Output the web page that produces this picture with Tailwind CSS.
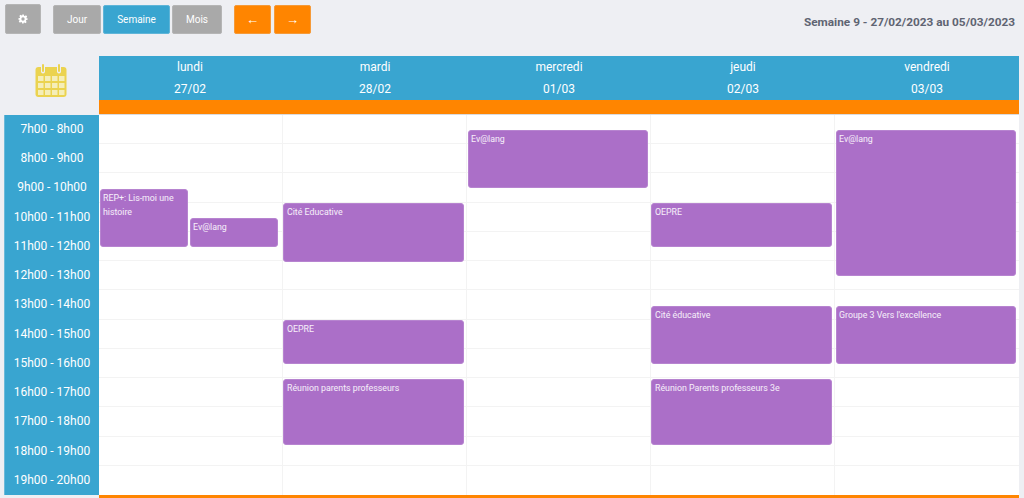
<!DOCTYPE html>
<html lang="fr"><head><meta charset="utf-8"><script src="https://cdn.jsdelivr.net/npm/@tailwindcss/browser@4"></script></head>
<body class="w-[1024px] h-[498px] overflow-hidden bg-[#eeeff3] font-['Roboto',sans-serif]">
<div class="h-[56px] pl-[5px] pr-[9px] pt-[4px] flex items-start">
  <button class="w-[36px] h-[30px] bg-[#a9a9a9] rounded-[2px] border border-[#b5b5b5] flex items-center justify-center mr-[12px]">
    <svg width="10" height="10" viewBox="0 0 24 24" fill="#fff"><path fill-rule="evenodd" d="M10 1h4l.6 3.200 1.900.8 2.700-1.800 2.800 2.800-1.800 2.700.8 1.900L23 10v4l-3.200.6-.8 1.900 1.800 2.700-2.800 2.800-2.700-1.800-1.900.8L13.800 23h-4l-.6-3.200-1.900-.8-2.700 1.800-2.800-2.800 1.800-2.700-.8-1.900L1 14v-4l3.200-.6.800-1.900-1.800-2.700 2.800-2.800 2.700 1.800 1.900-.8zM12 8a4 4 0 1 0 0 8 4 4 0 0 0 0-8z"/></svg>
  </button>
  <div class="flex gap-[2px] mt-[1px] text-[10px] text-white">
    <button class="w-[48px] h-[29px] bg-[#a9a9a9] rounded-[2px] border border-[#b5b5b5]">Jour</button>
    <button class="w-[67px] h-[29px] bg-[#39a5d0] rounded-[2px] border border-[#5fb5d8]">Semaine</button>
    <button class="w-[50px] h-[29px] bg-[#a9a9a9] rounded-[2px] border border-[#b5b5b5]">Mois</button>
  </div>
  <div class="flex gap-[3px] mt-[1px] ml-[12px] text-[13px] text-white">
    <button class="w-[37px] h-[29px] bg-[#ff8500] rounded-[2px] border border-[#f59a38]">←</button>
    <button class="w-[37px] h-[29px] bg-[#ff8500] rounded-[2px] border border-[#f59a38]">→</button>
  </div>
  <p class="ml-auto mt-[10px] text-[11.8px] leading-[16px] font-bold text-[#5f6472]">Semaine 9 - 27/02/2023 au 05/03/2023</p>
</div>
<div class="flex h-[58px] pl-[5px] pr-[5px]">
  <div class="w-[94px] pl-[30px] pt-[8px]">
    <svg width="32" height="34" viewBox="0 0 32 34"><rect x="0.500" y="3" width="31" height="30" rx="3" fill="#ebd34f"/><rect x="6" y="0.500" width="4" height="9" rx="2" fill="#eeeff3"/><rect x="22" y="0.500" width="4" height="9" rx="2" fill="#eeeff3"/><rect x="7" y="0" width="2" height="8" rx="1" fill="#ebd34f"/><rect x="23" y="0" width="2" height="8" rx="1" fill="#ebd34f"/><g fill="#f5eeb8"><rect x="3" y="12" width="5.500" height="5"/><rect x="10" y="12" width="5.500" height="5"/><rect x="17" y="12" width="5.500" height="5"/><rect x="24" y="12" width="5.500" height="5"/><rect x="3" y="19" width="5.500" height="5"/><rect x="10" y="19" width="5.500" height="5"/><rect x="17" y="19" width="5.500" height="5"/><rect x="24" y="19" width="5.500" height="5"/><rect x="3" y="26" width="5.500" height="5"/><rect x="10" y="26" width="5.500" height="5"/><rect x="17" y="26" width="5.500" height="5"/><rect x="24" y="26" width="5.500" height="5"/></g></svg>
  </div>
  <div class="w-[920px]">
    <div class="h-[44px] bg-[#39a5d0] grid grid-cols-5 text-center text-[12px] leading-[22px] text-white">
      <div class="pr-[2px]">lundi<br>27/02</div><div>mardi<br>28/02</div><div>mercredi<br>01/03</div><div>jeudi<br>02/03</div><div>vendredi<br>03/03</div>
    </div>
    <div class="h-[14px] bg-[#ff8500]"></div>
    <div class="h-[1px] bg-[#d9dade]"></div>
  </div>
</div>
<div class="flex pl-[4px] pr-[5px] mt-[1px]">
  <div class="w-[95px] h-[380px] bg-[#39a5d0] border-l border-[#6bb9d9] text-white text-[12px] leading-[29.23px] text-center">
    <div>7h00 - 8h00</div><div>8h00 - 9h00</div><div>9h00 - 10h00</div><div>10h00 - 11h00</div><div>11h00 - 12h00</div><div>12h00 - 13h00</div><div>13h00 - 14h00</div><div>14h00 - 15h00</div><div>15h00 - 16h00</div><div>16h00 - 17h00</div><div>17h00 - 18h00</div><div>18h00 - 19h00</div><div>19h00 - 20h00</div>
  </div>
  <div class="w-[920px] h-[380px] relative bg-white overflow-hidden">
    <div class="grid grid-rows-13 h-full absolute inset-0 divide-y divide-[#f3f3f3]">
      <div></div><div></div><div></div><div></div><div></div><div></div><div></div><div></div><div></div><div></div><div></div><div></div><div></div>
    </div>
    <div class="grid grid-cols-5 h-full absolute inset-0 divide-x divide-[#f3f3f3] text-[8.800px] leading-[14px] text-white/90">
      <div class="relative">
        <div class="absolute left-[1px] w-[88px] top-[74px] h-[58px] bg-[#ab6fc8] border border-[#b784d0] rounded-[3px] px-[2px] pt-[1px]">REP+: Lis-moi une histoire</div>
        <div class="absolute left-[91px] w-[88px] top-[103px] h-[29px] bg-[#ab6fc8] border border-[#b784d0] rounded-[3px] px-[2px] pt-[1px]">Ev@lang</div>
      </div>
      <div class="relative">
        <div class="absolute left-0 w-[181px] top-[88px] h-[59px] bg-[#ab6fc8] border border-[#b784d0] rounded-[3px] px-[3px] pt-[1px]">Cité Educative</div>
        <div class="absolute left-0 w-[181px] top-[205px] h-[44px] bg-[#ab6fc8] border border-[#b784d0] rounded-[3px] px-[3px] pt-[1px]">OEPRE</div>
        <div class="absolute left-0 w-[181px] top-[264px] h-[66px] bg-[#ab6fc8] border border-[#b784d0] rounded-[3px] px-[3px] pt-[1px]">Réunion parents professeurs</div>
      </div>
      <div class="relative">
        <div class="absolute left-[1px] w-[180px] top-[15px] h-[58px] bg-[#ab6fc8] border border-[#b784d0] rounded-[3px] px-[2px] pt-[1px]">Ev@lang</div>
      </div>
      <div class="relative">
        <div class="absolute left-0 w-[181px] top-[88px] h-[44px] bg-[#ab6fc8] border border-[#b784d0] rounded-[3px] px-[3px] pt-[1px]">OEPRE</div>
        <div class="absolute left-0 w-[181px] top-[191px] h-[58px] bg-[#ab6fc8] border border-[#b784d0] rounded-[3px] px-[3px] pt-[1px]">Cité éducative</div>
        <div class="absolute left-0 w-[181px] top-[264px] h-[66px] bg-[#ab6fc8] border border-[#b784d0] rounded-[3px] px-[3px] pt-[1px]">Réunion Parents professeurs 3e</div>
      </div>
      <div class="relative">
        <div class="absolute left-[1px] w-[180px] top-[15px] h-[146px] bg-[#ab6fc8] border border-[#b784d0] rounded-[3px] px-[2px] pt-[1px]">Ev@lang</div>
        <div class="absolute left-[1px] w-[180px] top-[191px] h-[58px] bg-[#ab6fc8] border border-[#b784d0] rounded-[3px] px-[2px] pt-[1px]">Groupe 3 Vers l'excellence</div>
      </div>
    </div>
  </div>
</div>
<div class="ml-[99px] w-[920px] h-[3px] bg-[#ff8500]"></div>
</body></html>
